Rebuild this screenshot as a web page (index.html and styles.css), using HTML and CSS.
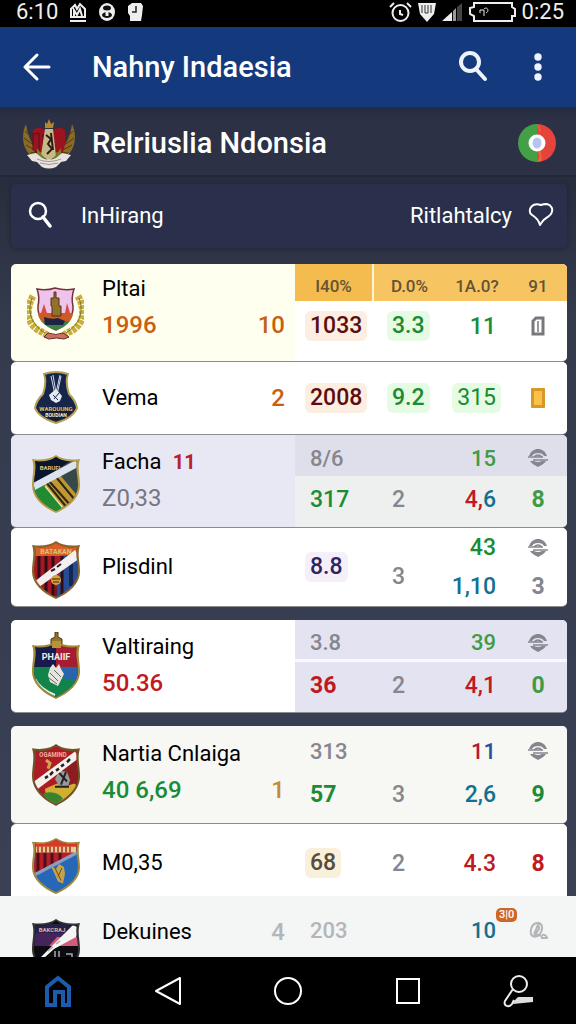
FILE: index.html
```html
<!DOCTYPE html>
<html lang="id">
<head>
    <meta charset="UTF-8">
    <meta name="viewport" content="width=device-width, initial-scale=1">
    <title>Nahny Indaesia</title>
    <link rel="stylesheet" href="styles.css">
</head>
<body>
    <svg width="0" height="0" class="defs" aria-hidden="true">
        <symbol id="shield" viewBox="0 0 50 60">
            <path d="M25 1 C18 6 9 6 1 5 C4 14 1 22 1 31 C1 44 12 53 25 59 C38 53 49 44 49 31 C49 22 46 14 49 5 C41 6 32 6 25 1Z"/>
        </symbol>
        <clipPath id="shieldClip">
            <path d="M25 3 C18 8 10 8 4 7 C6 15 3 22 3 31 C3 43 13 51 25 57 C37 51 47 43 47 31 C47 22 44 15 46 7 C40 8 32 8 25 3Z"/>
        </clipPath>
        <symbol id="globe" viewBox="0 0 20 20">
            <path d="M1 8C3 3 6 1 10 1s7 2 9 7h-3c-1-2-3-3-6-3S5 6 4 8z" fill="currentColor"/>
            <path d="M2 13h4q4 2 8 0h4c-2 3-5 4-8 6-3-2-6-3-8-6z" fill="currentColor"/>
            <path d="M0 9h15M5 12h15M6 9q4-4 8 0" fill="none" stroke="currentColor" stroke-width="1.500"/>
        </symbol>
    </svg>

    <div class="app">
        <div class="status">
            <span>6:10</span>
            <svg width="18" height="20" viewBox="0 0 18 20"><path d="M2 14V7l4-4 2 4 3-5 5 5v7M5 14V8l3 5 3-6 2 7M1 15h16M1 19h16" fill="none" stroke="#eee" stroke-width="2"/></svg>
            <svg width="18" height="20" viewBox="0 0 18 20"><ellipse cx="9" cy="10" rx="8" ry="9" fill="#eee"/><ellipse cx="9" cy="6" rx="4" ry="2.500" fill="#111"/><ellipse cx="9" cy="13" rx="5" ry="3" fill="#111"/><path d="M9 10v4" stroke="#eee" stroke-width="3" fill="none"/></svg>
            <svg width="16" height="20" viewBox="0 0 16 20"><path d="M1 4l4-3h9l2 3-1 9-1 6H3v-5l-2-3z" fill="#eee"/><path d="M9 4v6H5" stroke="#222" stroke-width="1.500" fill="none"/></svg>
            <div class="status-right">
                <svg width="23" height="20" viewBox="0 0 23 20"><circle cx="11.500" cy="11" r="8" fill="none" stroke="#eee" stroke-width="2"/><path d="M1 5l4-4M22 5l-4-4M11 8v4l3 1" fill="none" stroke="#eee" stroke-width="2"/></svg>
                <svg width="18" height="20" viewBox="0 0 18 20"><path d="M0 1h18l-2 11-7 8-7-8z" fill="#eee"/><path d="M4 3v8M7 3v8h3V3M13 3v8" stroke="#333" fill="none"/></svg>
                <svg width="20" height="20" viewBox="0 0 20 20"><path d="M0 19L10 10v9z" fill="#eee"/><path d="M11 9l3-3v13h-3z" fill="#999"/><path d="M15 5l5-4v18h-5z" fill="#444"/></svg>
                <svg width="48" height="20" viewBox="0 0 48 20"><path d="M6 1h38v4l3 2v7h-3v5H6v-5l-4-2V6l4-1z" fill="none" stroke="#eee" stroke-width="2"/><path d="M12 11v-3h4v6M16 7c3-3 6 2 2 4" fill="none" stroke="#eee"/></svg>
                <span>0:25</span>
            </div>
        </div>

        <header class="appbar">
            <button class="icon-btn" aria-label="Back">
                <svg width="30" height="30" viewBox="0 0 30 30"><path d="M27 15H3M15 3L3 15l12 12" fill="none" stroke="#fff" stroke-width="3" stroke-linecap="round" stroke-linejoin="round"/></svg>
            </button>
            <h1>Nahny Indaesia</h1>
            <button class="icon-btn" aria-label="Search">
                <svg width="30" height="32" viewBox="0 0 30 32"><circle cx="12" cy="11" r="9" fill="none" stroke="#edf3ff" stroke-width="4"/><path d="M18 18l9 10" stroke="#edf3ff" stroke-width="4" stroke-linecap="round"/></svg>
            </button>
            <button class="icon-btn more" aria-label="More">
                <svg width="8" height="30" viewBox="0 0 8 30"><circle cx="4" cy="5" r="3.700" fill="#edf3ff"/><circle cx="4" cy="15" r="3.700" fill="#edf3ff"/><circle cx="4" cy="25" r="3.700" fill="#edf3ff"/></svg>
            </button>
        </header>

        <div class="subbar">
            <svg width="54" height="52" viewBox="0 0 54 52">
                <path d="M4 7C-2 20 1 36 14 42L21 36C10 30 6 20 4 7zM50 7c6 13 3 29-10 35l-7-6c11-6 15-16 17-29z" fill="#8a6a25"/>
                <path d="M3 14l10 9M2 21l11 8M4 28l11 6M51 14l-10 9M52 21l-11 8M50 28l-11 6M8 36l9-1M46 36l-9-1" stroke="#4a3a18" stroke-width="1"/>
                <path d="M23 5l2 2 2-5 2 5 3-2-1 6h-8z" fill="#b8862c"/>
                <path d="M11 13q6-5 13 1v18l-10 6q-5-12-3-25zM43 13q-6-5-13 1v18l10 6q5-12 3-25z" fill="#9c1320"/>
                <path d="M11 17v16l6 4V16zM21 17v14" stroke="#5c0d16" fill="none"/>
                <path d="M23 12h8l3 27-7 5-8-6z" fill="#c6b98a"/>
                <path d="M24 18l5 4-3 5 4 5-5 5M29 16l2 17" stroke="#2a1c14" stroke-width="2" fill="none"/>
                <path d="M15 31l8 11-8-1zM39 31l-8 11 8-1z" fill="#738024"/>
                <path d="M5 38l9-2 6 5q7 3 14 0l6-5 9 2-5 6-5 1-5 5q-7 3-14 0l-5-5-5-1z" fill="#e9e2dd"/>
                <path d="M15 42q12 5 24 0M18 46q9 3 18 0" stroke="#a39590" fill="none"/>
            </svg>
            <h2>Relriuslia Ndonsia</h2>
            <svg width="38" height="38" viewBox="0 0 38 38"><path d="M19 0a19 19 0 0 0 0 38z" fill="#43a047"/><path d="M19 0a19 19 0 0 1 0 38z" fill="#e5433b"/><path d="M19 0c5 4 4 9 1 12l-1 14c3 4 3 8 0 12l5-1-1-11V12z" fill="#e56a32"/><circle cx="19" cy="19" r="8.500" fill="#fff"/><ellipse cx="19" cy="19" rx="4.500" ry="5.500" fill="#b7c4f2"/></svg>
        </div>

        <main class="content">
            <form class="search">
                <label for="q" aria-label="Search">
                    <svg width="26" height="28" viewBox="0 0 26 28"><circle cx="11" cy="10" r="8" fill="none" stroke="#fff" stroke-width="2.500"/><path d="M16 16l7 9" stroke="#fff" stroke-width="3.500" stroke-linecap="round"/></svg>
                </label>
                <input id="q" type="text" placeholder="InHirang">
                <button type="button">Ritlahtalcy
                    <svg width="26" height="26" viewBox="0 0 26 26"><path d="M13 3C10 2 6 2 4 4C1 7 1 11 4 13C7 15 10 16 12 23L14 20C16 16 20 16 23 12C26 7 23 3 19 2C17 2 15 2 13 3Z" fill="none" stroke="#fff" stroke-width="2" stroke-linejoin="round"/></svg>
                </button>
            </form>

            <section class="group">
                <article class="card tall cream">
                    <div class="crest">
                        <svg width="57" height="54" viewBox="0 0 57 54">
                            <path d="M6 10C-2 24 0 40 15 46l7 4M51 10c8 14 6 30-9 36l-7 4" fill="none" stroke="#c9ad3d" stroke-width="7" stroke-dasharray="4 1"/>
                            <path d="M5 12C0 26 4 38 18 47M52 12c5 14 1 26-13 35" fill="none" stroke="#7f7424" stroke-width="1"/>
                            <path d="M10 3q9 2 18-1 10 3 19 1-3 9-1 17 1 15-17 24Q10 36 11 20q2-9-1-17z" fill="#efc4ea" stroke="#74303e" stroke-width="1.500"/>
                            <path d="M11 27h35q0 4-3 8H14q-3-4-3-8z" fill="#cc5a22"/>
                            <path d="M14 35h29q-5 7-14 9-9-2-15-9z" fill="#3c8245"/>
                            <path d="M17 31q8 3 14 1l7 3-2 4H18z" fill="#1e2542"/>
                            <path d="M27 6h2v6h3v8h2v10h-9V20h-1v-8h3z" fill="#94702c" stroke="#4c3515"/>
                            <path d="M14 27l3-9 3 9zM38 27l2-10 3 10z" fill="#d64c3e"/>
                            <path d="M17 51l4-4q8 3 15 0l6 4-5 2q-8-2-15 0z" fill="#c97063" stroke="#6b2a25"/>
                        </svg>
                    </div>
                    <div class="info">
                        <h3>Pltai</h3>
                        <p class="score orange">1996 <span class="rank">10</span></p>
                    </div>
                    <table class="stats white">
                        <thead><tr><th>I40%</th><th>D.0%</th><th>1A.0?</th><th>91</th></tr></thead>
                        <tbody><tr>
                            <td><span class="val peach">1033</span></td>
                            <td><span class="val mint">3.3</span></td>
                            <td class="green">11</td>
                            <td><svg width="14" height="20" viewBox="0 0 14 20"><path d="M5 2h7v16H2V5z" fill="none" stroke="#77787f" stroke-width="3"/><path d="M7 5v11" stroke="#999" stroke-width="2"/></svg></td>
                        </tr></tbody>
                    </table>
                </article>

                <article class="card short">
                    <div class="crest">
                        <svg width="44" height="54" viewBox="0 0 44 54">
                            <path d="M10 3q12-4 24 0-3 8 1 20 7 7 8 14-4 10-21 15Q5 47 1 37q1-7 8-14 4-12 1-20z" fill="#15264a" stroke="#b3a157" stroke-width="2"/>
                            <path d="M5 36h34q-2 8-17 14Q8 44 5 36z" fill="#171e25"/>
                            <path d="M19 4l3 18 4-18M17 5l4 19M27 5l-4 19" stroke="#d4dcec" fill="none"/>
                            <path d="M22 18l6 7-2 5-4 2-5-3-2-5z" fill="#e5eaf2"/><path d="M19 24l5 5M25 22l-5 6" stroke="#17284d"/>
                            <text x="22" y="40" class="crest-text small gold-text">WAROUUNG</text><text x="22" y="46" class="crest-text tiny">BOUDIAN</text>
                        </svg>
                    </div>
                    <div class="info row">
                        <h3>Vema</h3>
                        <p class="score orange"><span class="rank">2</span></p>
                    </div>
                    <table class="stats white one">
                        <tbody><tr>
                            <td><span class="val peach">2008</span></td>
                            <td><span class="val mint">9.2</span></td>
                            <td><span class="val mint thin">315</span></td>
                            <td><svg width="16" height="22" viewBox="0 0 16 22"><rect x="1" y="1" width="14" height="20" rx="1" fill="#d9962a"/><rect x="4" y="4" width="8" height="14" fill="#fac348"/></svg></td>
                        </tr></tbody>
                    </table>
                </article>

                <article class="card mid lilac">
                    <div class="crest lower">
                        <svg width="50" height="60" viewBox="0 0 50 60">
                            <use href="#shield" fill="#b59c46"/>
                            <g clip-path="url(#shieldClip)">
                                <path d="M0 0h50v60H0z" fill="#35494a"/><path d="M0 0h50L0 33z" fill="#0c1530"/>
                                <path d="M0 36l15-8 22 30H0z" fill="#238a34"/>
                                <path d="M13 30l16-9 20 24-12 14z" fill="#c19734"/>
                                <path d="M15 28l22 27M18 27l22 25M25 23l19 23" stroke="#2c2714" stroke-width="2"/><path d="M14 32l18 22" stroke="#efe7a8" stroke-width="1.500"/>
                                <path d="M2 29L45 6l2 7L4 36z" fill="#dce3ef"/>
                            </g>
                            <text x="19" y="16" class="crest-text small gold-text">BARUFI</text>
                        </svg>
                    </div>
                    <div class="info">
                        <h3>Facha <small>11</small></h3>
                        <p class="score grey">Z0,33</p>
                    </div>
                    <table class="stats haze">
                        <tbody>
                            <tr class="top shade"><td>8/6</td><td></td><td class="lime">15</td><td><svg width="20" height="20"><use href="#globe"/></svg></td></tr>
                            <tr><td class="green">317</td><td>2</td><td class="red">4,<span class="blue">6</span></td><td class="lime bold">8</td></tr>
                        </tbody>
                    </table>
                </article>

                <article class="card short wide">
                    <div class="crest lower">
                        <svg width="50" height="60" viewBox="0 0 50 60">
                            <use href="#shield" fill="#86672c"/>
                            <g clip-path="url(#shieldClip)">
                                <path d="M0 0h50v60H0z" fill="#a71825"/><path d="M30 16h20v44H25z" fill="#264d94"/>
                                <path d="M8 16v34M15 16v40M22 16v40M31 16v40" stroke="#310d18" stroke-width="3"/><path d="M40 16v30" stroke="#17254f" stroke-width="4"/>
                                <path d="M0 0h50v14l-22 2H0z" fill="#da6125"/>
                                <path d="M3 42L44 10l5 8L8 47z" fill="#f4eeee"/>
                            </g>
                            <text x="25" y="14" class="crest-text gold-text">BATAKAN</text>
                            <path d="M20 31l4-2M26 27l4-3" stroke="#222" stroke-width="2"/><circle cx="25" cy="40" r="5" fill="#d7a33a"/><path d="M21 39h8M22 42h6M25 47v9" stroke="#3d1b15"/>
                        </svg>
                    </div>
                    <div class="info row"><h3>Plisdinl</h3></div>
                    <table class="stats white double">
                        <tbody>
                            <tr><td rowspan="2"><span class="val violet">8.8</span></td><td rowspan="2" class="low">3</td><td class="green">43</td><td><svg width="20" height="20"><use href="#globe"/></svg></td></tr>
                            <tr><td class="blue">1,10</td><td class="bold">3</td></tr>
                        </tbody>
                    </table>
                </article>
            </section>

            <section class="group">
                <article class="card mid">
                    <div class="crest">
                        <svg width="50" height="68" viewBox="0 0 50 68">
                            <path d="M24 0h3v5l4 2v9H20V7l4-2z" fill="#90752a" stroke="#4a3c16"/>
                            <g transform="translate(0 8)">
                                <use href="#shield" width="50" height="60" fill="#a38b35"/>
                                <g clip-path="url(#shieldClip)">
                                    <path d="M0 0h25v60H0z" fill="#161b4b"/><path d="M25 0h25v60H25z" fill="#a41d30"/>
                                    <path d="M0 27h26v33H0z" fill="#138449"/><path d="M25 27h25v14L25 60z" fill="#2765ac"/><path d="M25 37l22 4-22 19z" fill="#138449"/>
                                    <path d="M4 39q5 10 20 16" stroke="#e5f3ea" stroke-width="2" fill="none"/>
                                </g>
                                <path d="M19 28l3-4 3 4 3-4 2 5 3 5-6 12-8-4-2-7z" fill="#e6e6df"/><path d="M19 33l8 8M23 30l7 7M18 38l8 6" stroke="#666"/>
                                <text x="25" y="20" class="crest-text big">PHAIIF</text>
                            </g>
                            <path d="M21 9h9v7h-9z" fill="#b89236"/>
                        </svg>
                    </div>
                    <div class="info">
                        <h3>Valtiraing</h3>
                        <p class="score red">50.36</p>
                    </div>
                    <table class="stats lavender lined">
                        <tbody>
                            <tr class="top"><td>3.8</td><td></td><td class="lime">39</td><td><svg width="20" height="20"><use href="#globe"/></svg></td></tr>
                            <tr><td class="red bold">36</td><td>2</td><td class="red">4,1</td><td class="lime bold">0</td></tr>
                        </tbody>
                    </table>
                </article>
            </section>

            <section class="group">
                <article class="card tall ivory">
                    <div class="crest">
                        <svg width="50" height="64" viewBox="0 0 50 60" preserveAspectRatio="none">
                            <use href="#shield" width="50" height="60" fill="#6e5527"/>
                            <g clip-path="url(#shieldClip)">
                                <path d="M0 0h50v60H0z" fill="#ad1b25"/>
                                <path d="M25 27l25-14v47H25z" fill="#8b1d21"/>
                                <path d="M14 43l12-5 8 3 9-3 7 4-12 18H16z" fill="#d0ae30"/><path d="M13 47q12-3 19 5l-8 7-13-9z" fill="#39822f"/>
                                <path d="M28 26l8 1 3 8-2 6-9-1-4-6z" fill="#999"/><path d="M28 28l8 8M35 27l-5 12M24 41h14" stroke="#222" stroke-width="2"/>
                                <path d="M3 36L44 8l4 6L7 43z" fill="#f6f1eb"/>
                            </g>
                            <text x="22" y="13" class="crest-text small pink-text">OGAMIND</text>
                            <path d="M14 33l3-2M19 30l3-3M25 26l3-2M30 22l3-2M36 18l3-3" stroke="#222" stroke-width="2.500"/><path d="M15 16l4 3-2 5" stroke="#d1a351" stroke-width="3" fill="none"/>
                        </svg>
                    </div>
                    <div class="info">
                        <h3>Nartia Cnlaiga</h3>
                        <p class="score green">40 6,69 <span class="rank amber">1</span></p>
                    </div>
                    <table class="stats ivory deep">
                        <tbody>
                            <tr class="top"><td>313</td><td></td><td class="crimson">1<span class="navy">1</span></td><td><svg width="20" height="20"><use href="#globe"/></svg></td></tr>
                            <tr><td class="green bold">57</td><td>3</td><td class="teal">2,6</td><td class="green bold">9</td></tr>
                        </tbody>
                    </table>
                </article>

                <article class="card short wide">
                    <div class="crest lower">
                        <svg width="50" height="58" viewBox="0 0 50 60" preserveAspectRatio="none">
                            <use href="#shield" width="50" height="60" fill="#a2893e"/>
                            <g clip-path="url(#shieldClip)">
                                <path d="M0 0h50v60H0z" fill="#2667b7"/><path d="M0 0h50v13L0 40z" fill="#b51d29"/>
                                <path d="M7 15v22M14 15v18M21 15v14M29 15v10" stroke="#4a101b" stroke-width="3"/>
                                <path d="M0 39L50 12v4L0 43z" fill="#8b9cbc"/><path d="M0 0h50v12H0z" fill="#d83a25"/>
                                <path d="M5 10h40v6H5z" fill="#e9cb94"/>
                            </g>
                            <path d="M7 10v6M11 10v6M15 10v6M19 10v6M23 10v6M27 10v6M31 10v6M35 10v6M39 10v6" stroke="#a32b20" stroke-width="1.500"/>
                            <path d="M20 30l5 3 3-5 5 3 1 7-2 10-5-2-4-9z" fill="#c5a24b"/><path d="M24 32l6 13M31 32l-4 9" stroke="#66501f"/>
                        </svg>
                    </div>
                    <div class="info row"><h3>M0,35</h3></div>
                    <table class="stats white one">
                        <tbody><tr><td><span class="val sand">68</span></td><td>2</td><td class="red">4.3</td><td class="red bold">8</td></tr></tbody>
                    </table>
                </article>
            </section>
        </main>

        <article class="card peek">
            <div class="crest">
                <svg width="50" height="60" viewBox="0 0 50 60">
                    <use href="#shield" fill="#333"/>
                    <g clip-path="url(#shieldClip)">
                        <path d="M0 0h50v60H0z" fill="#0b0b10"/><path d="M0 6h50v9H0z" fill="#242247"/><path d="M0 15h50v13H0z" fill="#45245c"/><path d="M26 19h24v9H18z" fill="#d45c78"/>
                        <path d="M10 39L42 7l6 3-3 9-22 12-10 9z" fill="#f5f5f3"/>
                    </g>
                    <text x="21" y="14" class="crest-text small pink-text">BAKCRAJ</text>
                    <path d="M17 33l5-4M25 26l4-3M24 33v10M28 33v10M35 36h6v6" stroke="#aaa" stroke-width="1.500" fill="none"/>
                </svg>
            </div>
            <div class="info row">
                <h3>Dekuines</h3>
                <p class="score"><span class="rank faint">4</span></p>
            </div>
            <table class="stats">
                <tbody><tr class="top"><td class="faint">203</td><td></td><td class="teal"><span class="tagged">10<sup>3|0</sup></span></td><td class="faint"><svg width="20" height="20" viewBox="0 0 20 20"><path d="M11 2C5 1 2 7 3 13c2 4 7 3 9 0s4-9-1-11L6 13M8 6q4-2 3 2l-4 6q6-1 7 3h5q-1-4-5-3" fill="none" stroke="currentColor" stroke-width="2"/></svg></td></tr></tbody>
            </table>
        </article>

        <nav class="navbar">
            <button aria-label="Home"><svg width="30" height="34" viewBox="0 0 30 34"><path d="M4 31V13L15 4l11 9v18h-6V18h-8v13z" fill="none" stroke="#1c5cae" stroke-width="4"/><path d="M12 18v9" stroke="#1c5cae" stroke-width="3"/></svg></button>
            <button aria-label="Back"><svg width="28" height="32" viewBox="0 0 28 32"><path d="M26 3v26L2 16z" fill="none" stroke="#fff" stroke-width="2" stroke-linejoin="round"/></svg></button>
            <button aria-label="Start"><svg width="30" height="30" viewBox="0 0 30 30"><circle cx="15" cy="15" r="13" fill="none" stroke="#fff" stroke-width="2"/></svg></button>
            <button aria-label="Recent"><svg width="26" height="28" viewBox="0 0 26 28"><rect x="2" y="2" width="22" height="24" fill="none" stroke="#fff" stroke-width="2"/></svg></button>
            <button aria-label="Search"><svg width="32" height="34" viewBox="0 0 32 34"><circle cx="17" cy="10" r="8" fill="none" stroke="#eee" stroke-width="2"/><path d="M11 15L3 27c-2 5 4 7 7 3l2-4" fill="none" stroke="#eee" stroke-width="2"/><path d="M12 27l4-4h15v5l-20 2z" fill="#ddd"/></svg></button>
        </nav>
    </div>
</body>
</html>
```
FILE: styles.css
```css
* {
    box-sizing: border-box;
}

body {
    margin: 0;
    font-family: Roboto, "Liberation Sans", sans-serif;
    background: #343a4c;
}

h1, h2, h3, p {
    margin: 0;
    font-weight: 400;
}

button {
    padding: 0;
    border: none;
    background: none;
    font-family: inherit;
    color: inherit;
    cursor: pointer;
}

svg {
    display: block;
    flex-shrink: 0;
}

.defs {
    position: absolute;
}

.app {
    display: flex;
    flex-direction: column;
    height: 100vh;
}

/* status bar */
.status {
    display: flex;
    align-items: center;
    gap: 11px;
    height: 27px;
    padding: 0 12px 4px 16px;
    background: #000;
    color: #eee;
    font-size: 22px;
    flex-shrink: 0;
}

.status-right {
    display: flex;
    align-items: center;
    gap: 6px;
    margin-left: auto;
}

/* headers */
.appbar {
    display: flex;
    align-items: center;
    height: 80px;
    padding: 0 34px 0 22px;
    background: #143a7d;
    color: #fff;
    flex-shrink: 0;
}

.appbar h1 {
    flex: 1;
    margin-left: 40px;
    font-size: 29px;
    font-weight: 500;
}

.more {
    margin-left: 46px;
}

.subbar {
    display: flex;
    align-items: center;
    height: 70px;
    padding: 4px 20px 0 22px;
    background: linear-gradient(#262c3f, #2c3145 20%);
    border-bottom: 2px solid #22283a;
    color: #fff;
    flex-shrink: 0;
}

.subbar h2 {
    flex: 1;
    margin-left: 16px;
    font-size: 29px;
    font-weight: 500;
}

/* list */
.content {
    flex: 1;
    min-height: 0;
    overflow: hidden;
    padding: 7px 9px 0 11px;
    background: linear-gradient(#282d3d, #343b4d 20%, #3a4155);
}

.search {
    display: flex;
    align-items: center;
    height: 64px;
    padding: 0 13px 2px 16px;
    margin-bottom: 16px;
    border-radius: 5px;
    background: #2a304b;
    box-shadow: 0 1px 5px rgba(0, 0, 0, 0.3);
    color: #fff;
}

.search input {
    flex: 1;
    min-width: 0;
    margin-left: 28px;
    padding: 0;
    border: none;
    outline: none;
    background: none;
    color: #fff;
    font-family: inherit;
    font-size: 22px;
}

.search input::placeholder {
    color: #fff;
    opacity: 1;
}

.search button {
    display: flex;
    align-items: center;
    gap: 16px;
    font-size: 22px;
}

.group {
    display: flex;
    flex-direction: column;
    gap: 1px;
    margin-bottom: 14px;
}

.card {
    display: flex;
    flex-shrink: 0;
    overflow: hidden;
    padding-left: 16px;
    border-radius: 5px;
    background: #fff;
    box-shadow: 0 1px 0 #8b8c92;
}

.tall {
    min-height: 97px;
}

.mid {
    min-height: 92px;
}

.short {
    min-height: 72px;
}

.wide {
    min-height: 78px;
}

.cream {
    background: #fffff0;
}

.lilac {
    background: #e8e8f5;
}

.ivory {
    background: #f7f7f4;
}

.crest {
    display: flex;
    align-items: center;
    justify-content: center;
    width: 57px;
    flex-shrink: 0;
}

.crest.lower {
    padding-top: 6px;
}

.crest-text {
    font-size: 7px;
    font-weight: 700;
    text-anchor: middle;
    fill: #eee;
}

.small {
    font-size: 6px;
}

.tiny {
    font-size: 5px;
}

.big {
    font-size: 9px;
}

.gold-text {
    fill: #dfc274;
}

.pink-text {
    fill: #e8b0a8;
}

.info {
    display: flex;
    flex-direction: column;
    justify-content: center;
    flex: 1;
    min-width: 0;
    padding: 0 10px 6px 18px;
}

.cream .info {
    padding-bottom: 12px;
}

.mid .info {
    padding-bottom: 2px;
}

.info.row {
    flex-direction: row;
    align-items: center;
    justify-content: flex-start;
    padding-bottom: 0;
}

.info.row .score {
    flex: 1;
}

.info h3 {
    font-size: 22px;
    line-height: 36px;
    white-space: nowrap;
}

.info small {
    margin-left: 6px;
    font-size: 20px;
    font-weight: 700;
    color: #b8202c;
}

.score {
    display: flex;
    font-size: 24px;
    font-weight: 500;
    line-height: 36px;
}

.rank {
    margin-left: auto;
}

/* numbers */
.stats {
    width: 272px;
    flex-shrink: 0;
    align-self: stretch;
    table-layout: fixed;
    border-collapse: collapse;
    color: #85868e;
    font-size: 23px;
    font-weight: 500;
}

.stats th,
.stats td {
    padding: 0;
    height: 48px;
}

.stats th {
    height: 37px;
    padding-top: 6px;
    background: #f6c562;
    color: #665234;
    font-size: 17px;
    font-weight: 500;
    text-align: center;
}

.stats th:first-child {
    border-right: 2px solid #fff3d6;
    background: #f4bc4e;
}

.stats thead + tbody td {
    padding-bottom: 10px;
}

.stats tr > :nth-child(1) {
    width: 78px;
}

.stats tr > :nth-child(2) {
    width: 72px;
}

.stats tr > :nth-child(3) {
    width: 64px;
}

.stats td:nth-child(1) {
    padding-left: 15px;
}

.stats td:nth-child(2) {
    padding-left: 19px;
}

.stats td:nth-child(3) {
    padding-right: 13px;
    text-align: right;
}

.stats td:nth-child(4) {
    text-align: center;
}

.stats td svg {
    margin: 0 auto;
}

/* the second line of a two line block carries only the last two cells */
.double tr + tr td:nth-child(1) {
    padding: 0 13px 0 0;
    text-align: right;
}

.double tr + tr td:nth-child(2) {
    padding: 0;
    text-align: center;
}

.double tr td {
    height: 32px;
}

.stats .low {
    padding-top: 18px;
}

.stats .top td {
    height: 38px;
    padding-top: 6px;
    font-size: 22px;
}

.stats .top + tr td {
    padding-bottom: 4px;
}

.deep .top td {
    height: 40px;
}

.shade {
    background: #dfdfec;
}

.white {
    background: #fff;
}

.haze {
    background: #eef0f0;
}

.lavender {
    background: #e3e3f2;
}

.lined .top {
    border-bottom: 3px solid #f8f8fd;
}

.val {
    display: inline-block;
    margin: 0 -5px;
    padding: 0 5px;
    border-radius: 6px;
    line-height: 30px;
}

.peach {
    background: #fdeee2;
    color: #5c0d0d;
}

.mint {
    background: #e6fbe3;
    color: #1c8a2e;
}

.thin {
    font-weight: 400;
}

.violet {
    background: #f5eff9;
    color: #2d2562;
}

.sand {
    background: #f8f0da;
    color: #574c3c;
}

.bold {
    font-weight: 700;
}

.orange {
    color: #c9600f;
}

.grey {
    color: #77777f;
    font-weight: 400;
}

.green {
    color: #1a8c34;
}

.lime {
    color: #3f9b45;
}

.red {
    color: #bf1a22;
}

.crimson {
    color: #b01c35;
}

.navy {
    color: #28519c;
}

.blue,
.teal {
    color: #14708f;
}

.amber {
    color: #c98a2c;
}

.faint {
    color: #b4b5b8;
}

/* row that peeks out above the navigation */
.peek {
    height: 61px;
    padding: 0 9px 0 27px;
    border-radius: 0;
    background: #f4f5f5;
    box-shadow: none;
}

.peek .crest {
    align-items: flex-start;
    padding-top: 22px;
}

.peek .info {
    padding-top: 10px;
}

.peek .stats .top td {
    padding-top: 8px;
}

.tagged {
    position: relative;
}

.tagged sup {
    position: absolute;
    left: 100%;
    top: -10px;
    padding: 0 3px;
    border-radius: 5px;
    background: #cf6526;
    color: #fff;
    font-size: 11px;
    line-height: 14px;
}

/* bottom navigation */
.navbar {
    display: flex;
    align-items: center;
    height: 67px;
    padding: 0 8px;
    background: #000;
    flex-shrink: 0;
}

.navbar button {
    display: flex;
    justify-content: center;
    flex: 6;
}

.navbar button:first-child,
.navbar button:last-child {
    flex: 5;
}
```
